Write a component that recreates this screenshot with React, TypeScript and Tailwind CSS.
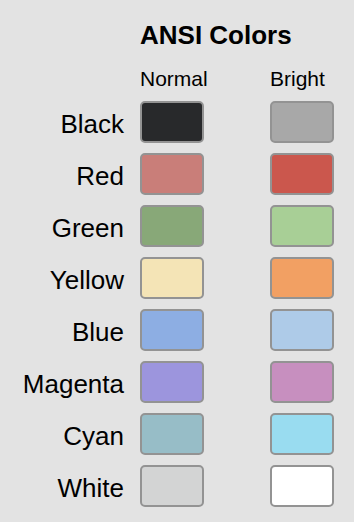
const rows = [
  { name: "Black", normal: "bg-[#28292b]", bright: "bg-[#a8a8a8]" },
  { name: "Red", normal: "bg-[#c97e79]", bright: "bg-[#cb574d]" },
  { name: "Green", normal: "bg-[#88a878]", bright: "bg-[#a8cf96]" },
  { name: "Yellow", normal: "bg-[#f4e4b6]", bright: "bg-[#f2a063]" },
  { name: "Blue", normal: "bg-[#8daee3]", bright: "bg-[#aecbe8]" },
  { name: "Magenta", normal: "bg-[#9c95dd]", bright: "bg-[#c78fbf]" },
  { name: "Cyan", normal: "bg-[#97bdc7]", bright: "bg-[#99dcf0]" },
  { name: "White", normal: "bg-[#d3d4d4]", bright: "bg-[#ffffff]" },
];

function Swatch({ color }: { color: string }) {
  return <div className={`h-[42px] w-[64px] rounded-[5px] border-2 border-[#939393] ${color}`} />;
}

export default function App() {
  return (
    <div className="min-h-[522px] w-[354px] bg-[#e3e3e3] font-['Liberation_Sans',Arial,sans-serif] text-black">
      <div className="pl-[140px] pt-[20px]">
        <h1 className="text-[26px] font-bold leading-[30px]">ANSI Colors</h1>
      </div>

      {/* label | normal (swatch + spacing) | bright */}
      <div className="mt-[17px] grid grid-cols-[124px_114px_64px] gap-x-[16px] gap-y-[10px]">
        <div />
        <div className="text-[21px] leading-[24px] whitespace-nowrap">Normal</div>
        <div className="text-[21px] leading-[24px] whitespace-nowrap">Bright</div>

        {rows.map((row) => (
          <div key={row.name} className="contents">
            <div className="flex items-center justify-end pt-[4px] text-[26px] leading-[32px]">{row.name}</div>
            <Swatch color={row.normal} />
            <Swatch color={row.bright} />
          </div>
        ))}
      </div>
    </div>
  );
}
